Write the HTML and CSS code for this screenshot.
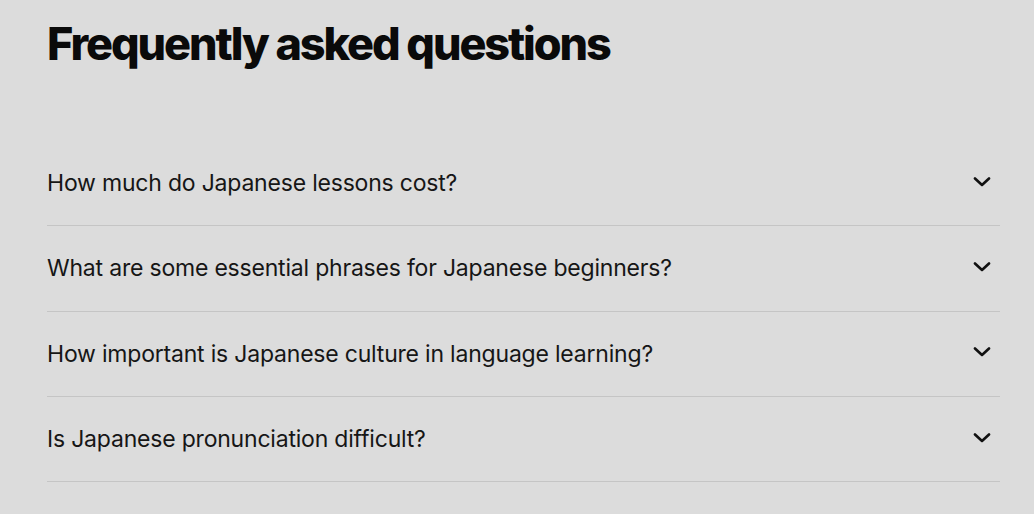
FILE: index.html
```html
<!DOCTYPE html>
<html lang="en">
<head>
<meta charset="utf-8">
<title>FAQ</title>
<link rel="stylesheet" href="styles.css">
</head>
<body>
<section class="faq">
  <h2 class="faq-title">Frequently asked questions</h2>
  <ul class="faq-list">
    <li class="faq-item"><span class="faq-q">How much do Japanese lessons cost?</span>
      <svg class="chev" viewBox="0 0 18 10" width="18" height="10"><path d="M2 1.5 L9 8 L16 1.5" fill="none" stroke="#111" stroke-width="2.6" stroke-linecap="round" stroke-linejoin="round"/></svg></li>
    <li class="faq-item"><span class="faq-q">What are some essential phrases for Japanese beginners?</span>
      <svg class="chev" viewBox="0 0 18 10" width="18" height="10"><path d="M2 1.5 L9 8 L16 1.5" fill="none" stroke="#111" stroke-width="2.6" stroke-linecap="round" stroke-linejoin="round"/></svg></li>
    <li class="faq-item"><span class="faq-q">How important is Japanese culture in language learning?</span>
      <svg class="chev" viewBox="0 0 18 10" width="18" height="10"><path d="M2 1.5 L9 8 L16 1.5" fill="none" stroke="#111" stroke-width="2.6" stroke-linecap="round" stroke-linejoin="round"/></svg></li>
    <li class="faq-item"><span class="faq-q">Is Japanese pronunciation difficult?</span>
      <svg class="chev" viewBox="0 0 18 10" width="18" height="10"><path d="M2 1.5 L9 8 L16 1.5" fill="none" stroke="#111" stroke-width="2.6" stroke-linecap="round" stroke-linejoin="round"/></svg></li>
  </ul>
</section>
</body>
</html>
```
FILE: styles.css
```css
html, body {
  margin: 0;
  padding: 0;
  background: #dcdcdc;
}
body {
  font-family: Inter, "Noto Sans", sans-serif;
  color: #111;
}
.faq {
  padding: 14px 34px 0 47px;
}
.faq-title {
  margin: 0;
  font-size: 45px;
  line-height: 60px;
  font-weight: 800;
  letter-spacing: -2.1px;
  color: #0a0a0a;
}
.faq-list {
  list-style: none;
  margin: 67px 0 0;
  padding: 0;
}
.faq-item {
  display: flex;
  align-items: center;
  justify-content: space-between;
  height: 84.3px;
  border-bottom: 1px solid #c5c5c5;
}
.faq-q {
  font-size: 23px;
  font-weight: 400;
  letter-spacing: -0.2px;
  color: #161616;
}
.chev {
  margin-right: 9px;
  margin-top: -3px;
}
```
